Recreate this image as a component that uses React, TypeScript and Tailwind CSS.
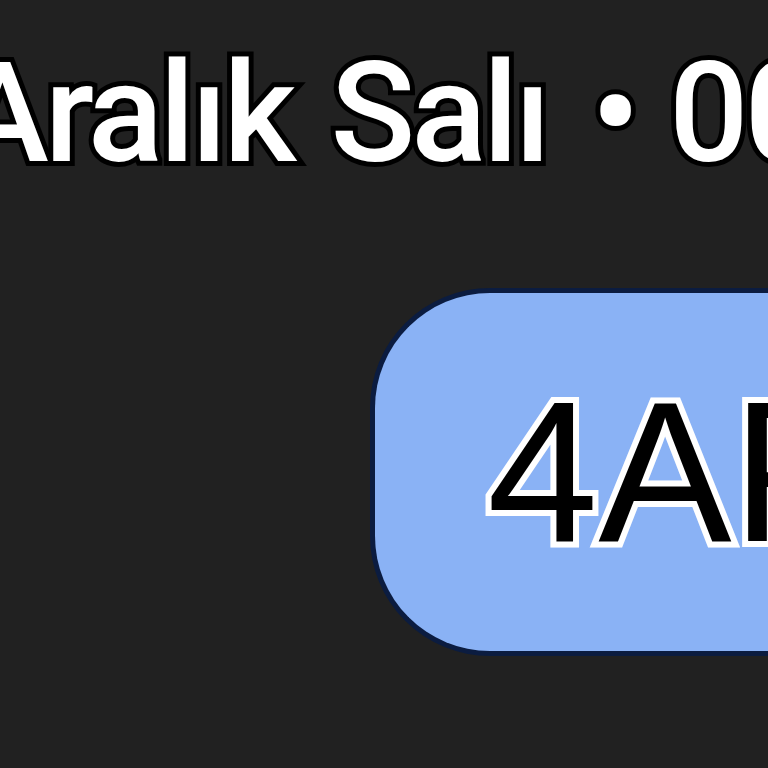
export default function App() {
  return (
    <div className="w-[768px] h-[768px] overflow-hidden bg-[#212121] flex flex-col">
      {/* date line */}
      <div
        className="pt-[43px] -ml-[44px] flex items-baseline whitespace-nowrap text-white font-medium text-[140px] leading-none tracking-[-4px] [paint-order:stroke_fill] [-webkit-text-stroke:10px_#000]"
        style={{ fontFamily: 'Roboto, "Noto Sans", sans-serif' }}
      >
        <span>Aralık</span>
        <span className="ml-[38px]">Salı</span>
        <span className="ml-[44px]">•</span>
        <span className="ml-[33px]">00:00</span>
      </div>

      {/* chip */}
      <div className="mt-[105px] ml-[370px] flex">
        <div className="w-[520px] h-[368px] shrink-0 bg-[#8ab2f5] border-[5px] border-r-0 border-[#0b1c40] rounded-l-[120px] flex items-center pl-[112px]">
          <span
            className="whitespace-nowrap text-black text-[200px] leading-none [paint-order:stroke_fill] [-webkit-text-stroke:12px_#fff]"
            style={{ fontFamily: '"Liberation Sans", Arial, sans-serif' }}
          >
            4AP
          </span>
        </div>
      </div>
    </div>
  );
}
